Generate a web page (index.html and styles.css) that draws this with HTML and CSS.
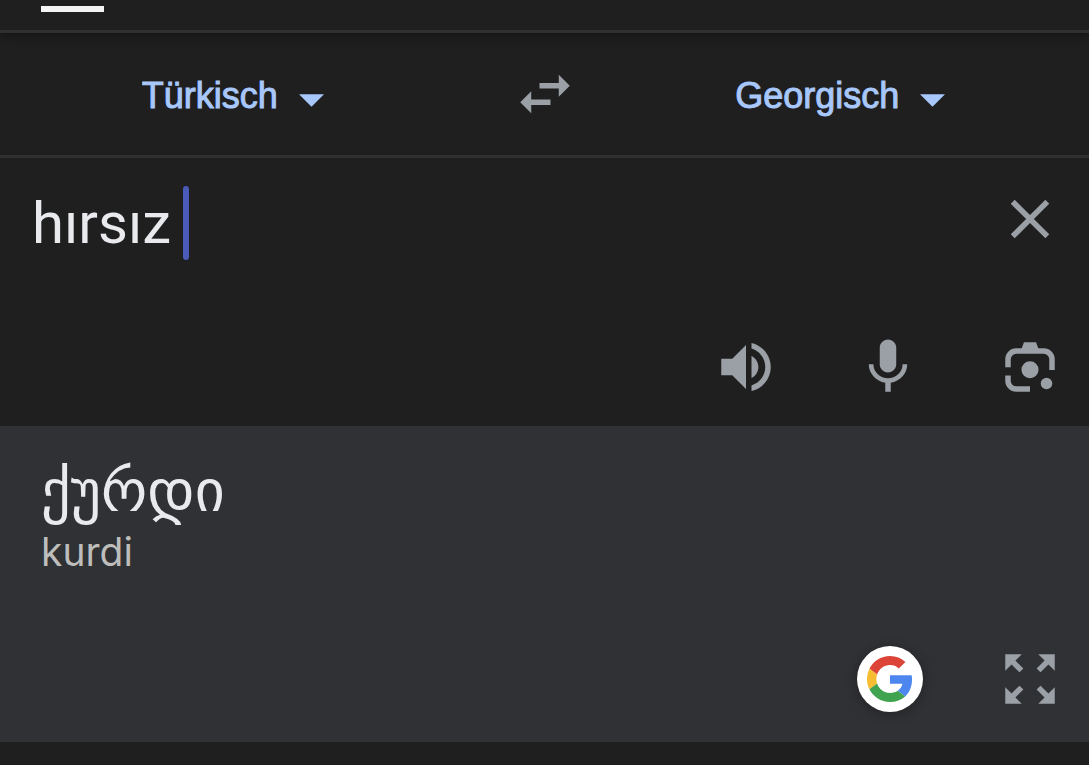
FILE: index.html
```html
<!DOCTYPE html>
<html lang="de">
<head>
    <meta charset="UTF-8">
    <meta name="viewport" content="width=device-width, initial-scale=1.0">
    <title>Übersetzer</title>
    <link rel="stylesheet" href="styles.css">
</head>
<body>
    <header class="tabs">
        <div class="tab-indicator"></div>
    </header>

    <main>
        <div class="languages">
            <div class="language">
                <select class="language-select" aria-label="Ausgangssprache">
                    <option>Türkisch</option>
                </select>
                <svg class="arrow" viewBox="0 0 24 12"><path d="M0 0h24L12 12z"/></svg>
            </div>
            <button class="icon-button" type="button" aria-label="Sprachen tauschen">
                <svg class="icon" viewBox="0 0 24 24"><path d="M6.99 11L3 15l3.99 4v-3H14v-2H6.99v-3zM21 9l-3.99-4v3H10v2h7.01v3L21 9z"/></svg>
            </button>
            <div class="language target-language">
                <select class="language-select" aria-label="Zielsprache">
                    <option>Georgisch</option>
                </select>
                <svg class="arrow" viewBox="0 0 24 12"><path d="M0 0h24L12 12z"/></svg>
            </div>
        </div>

        <section class="source">
            <div class="source-row">
                <div class="source-field">
                    <textarea class="source-text" rows="1" aria-label="Ausgangstext" spellcheck="false">hırsız</textarea>
                    <span class="caret"></span>
                </div>
                <button class="icon-button" type="button" aria-label="Text löschen">
                    <svg class="icon" viewBox="0 0 24 24"><path d="M19 6.41L17.59 5 12 10.59 6.41 5 5 6.41 10.59 12 5 17.59 6.41 19 12 13.41 17.59 19 19 17.59 13.41 12z"/></svg>
                </button>
            </div>
            <div class="actions">
                <button class="icon-button" type="button" aria-label="Anhören">
                    <svg class="icon" viewBox="0 0 24 24"><path d="M3 9v6h4l5 5V4L7 9H3zm13.5 3c0-1.77-1.02-3.29-2.5-4.03v8.05c1.48-.73 2.5-2.25 2.5-4.02zM14 3.23v2.06c2.89.86 5 3.54 5 6.71s-2.11 5.85-5 6.71v2.06c4.01-.91 7-4.49 7-8.77s-2.99-7.86-7-8.77z"/></svg>
                </button>
                <button class="icon-button" type="button" aria-label="Spracheingabe">
                    <svg class="icon" viewBox="0 0 24 24"><path d="M12 14c1.66 0 2.99-1.34 2.99-3L15 5c0-1.66-1.34-3-3-3S9 3.34 9 5v6c0 1.66 1.34 3 3 3zm5.3-3c0 3-2.54 5.1-5.3 5.1S6.7 14 6.7 11H5c0 3.41 2.72 6.23 6 6.72V21h2v-3.28c3.28-.48 6-3.3 6-6.72h-1.7z"/></svg>
                </button>
                <button class="icon-button" type="button" aria-label="Kamera">
                    <svg class="icon" viewBox="0 0 24 24">
                        <path d="M9.8 3h4.4l.8 2.2V6H9v-.8z"/>
                        <path class="icon-line" d="M4 12.1V9.2a3 3 0 0 1 3-3h10a3 3 0 0 1 3 3v3.9M4 15.1V17a3 3 0 0 0 3 3h5"/>
                        <circle cx="12" cy="13" r="3.1"/>
                        <circle cx="18" cy="18" r="2.1"/>
                    </svg>
                </button>
            </div>
        </section>

        <section class="result">
            <div>
                <div class="translation" lang="ka">ქურდი</div>
                <div class="transliteration">kurdi</div>
            </div>
            <div class="actions">
                <button class="google-button" type="button" aria-label="Google-Suche">
                    <svg class="google-logo" viewBox="0 0 48 48">
                        <path fill="#db4437" d="M24 9.5c3.54 0 6.71 1.22 9.21 3.6l6.85-6.85C35.9 2.38 30.47 0 24 0 14.62 0 6.51 5.38 2.56 13.22l7.98 6.19C12.43 13.72 17.74 9.5 24 9.5z"/>
                        <path fill="#4c86ee" d="M46.98 24.55c0-1.57-.15-3.09-.38-4.55H24v9.02h12.94c-.58 2.96-2.26 5.48-4.78 7.18l7.73 6c4.51-4.18 7.09-10.36 7.09-17.65z"/>
                        <path fill="#f6bd32" d="M10.53 28.59c-.48-1.45-.76-2.99-.76-4.59s.27-3.14.76-4.59l-7.98-6.19C.92 16.46 0 20.12 0 24s.92 7.54 2.56 10.78z"/>
                        <path fill="#3fa34f" d="M24 48c6.48 0 11.93-2.13 15.89-5.81l-7.73-6c-2.15 1.45-4.92 2.3-8.16 2.3-6.26 0-11.57-4.22-13.47-9.91l-7.98 6.19C6.51 42.62 14.62 48 24 48z"/>
                    </svg>
                </button>
                <button class="icon-button" type="button" aria-label="Vollbild">
                    <svg class="icon" viewBox="0 0 24 24"><path d="M15 3l2.3 2.3-2.89 2.87 1.42 1.42L18.7 6.7 21 9V3h-6zM3 9l2.3-2.3 2.87 2.89 1.42-1.42L6.7 5.3 9 3H3v6zm6 12l-2.3-2.3 2.89-2.87-1.42-1.42L5.3 17.3 3 15v6h6zm12-6l-2.3 2.3-2.87-2.89-1.42 1.42 2.89 2.87L15 21h6v-6z"/></svg>
                </button>
            </div>
        </section>
    </main>
</body>
</html>
```

FILE: styles.css
```css
* {
    box-sizing: border-box;
}
body {
    margin: 0;
    background-color: #1f1f1f;
    color: #e8eaed;
    font-family: Inter, "DejaVu Sans", sans-serif;
}
button {
    padding: 0;
    border: none;
    background: none;
    cursor: pointer;
}
.tabs {
    padding: 6px 41px 18px;
    border-bottom: 3px solid #303031;
    box-shadow: 0 2px 12px rgba(0, 0, 0, 0.4);
}
.tab-indicator {
    width: 63px;
    height: 6px;
    background-color: #f4f4f5;
}
.languages {
    display: grid;
    grid-template-columns: 1fr 158px 1fr;
    align-items: center;
    justify-items: center;
    padding: 28px 0;
    border-bottom: 3px solid #303031;
}
.language {
    display: flex;
    align-items: center;
    gap: 20px;
}
.target-language {
    margin-right: 32px;
}
.language-select {
    appearance: none;
    padding: 4px 0 0;
    border: none;
    background: none;
    color: #a8c7fa;
    font-family: "Liberation Sans", Arial, sans-serif;
    font-size: 36px;
    line-height: 44px;
    -webkit-text-stroke: 1px #a8c7fa;
}
.arrow {
    width: 25px;
    height: 13px;
    margin-top: 12px;
    fill: #a8c7fa;
}
.icon-button {
    width: 66px;
    height: 66px;
    color: #9aa0a6;
}
.icon {
    display: block;
    width: 100%;
    fill: currentColor;
}
.icon-line {
    fill: none;
    stroke: currentColor;
    stroke-width: 2;
}
.source {
    padding: 28px 26px 26px 32px;
}
.source-row {
    display: flex;
    align-items: flex-start;
    margin-bottom: 74px;
}
.source-field {
    position: relative;
    flex: 1;
}
.source-text {
    display: block;
    width: 100%;
    padding: 0;
    border: none;
    outline: none;
    resize: none;
    overflow: hidden;
    background: none;
    color: #e8eaed;
    caret-color: transparent;
    font-family: Roboto, sans-serif;
    font-size: 58px;
    line-height: 74px;
}
/* sits after the last typed character */
.caret {
    position: absolute;
    top: 0;
    left: 151px;
    width: 6px;
    height: 74px;
    border-radius: 3px;
    background-color: #4a5ab8;
}
.actions {
    display: flex;
    align-items: center;
    justify-content: flex-end;
    gap: 76px;
}
.result {
    padding: 28px 26px 30px 41px;
    background-color: #303134;
}
.translation {
    font-family: "DejaVu Sans", sans-serif;
    font-size: 58px;
    line-height: 74px;
}
.transliteration {
    color: #bdbdbb;
    font-size: 39px;
    line-height: 48px;
}
.result .actions {
    gap: 74px;
    margin-top: 70px;
}
.google-button {
    display: flex;
    align-items: center;
    justify-content: center;
    width: 66px;
    height: 66px;
    border-radius: 50%;
    background-color: #fff;
    box-shadow: 0 2px 12px rgba(0, 0, 0, 0.3);
}
.google-logo {
    width: 46px;
    height: 46px;
}
```
